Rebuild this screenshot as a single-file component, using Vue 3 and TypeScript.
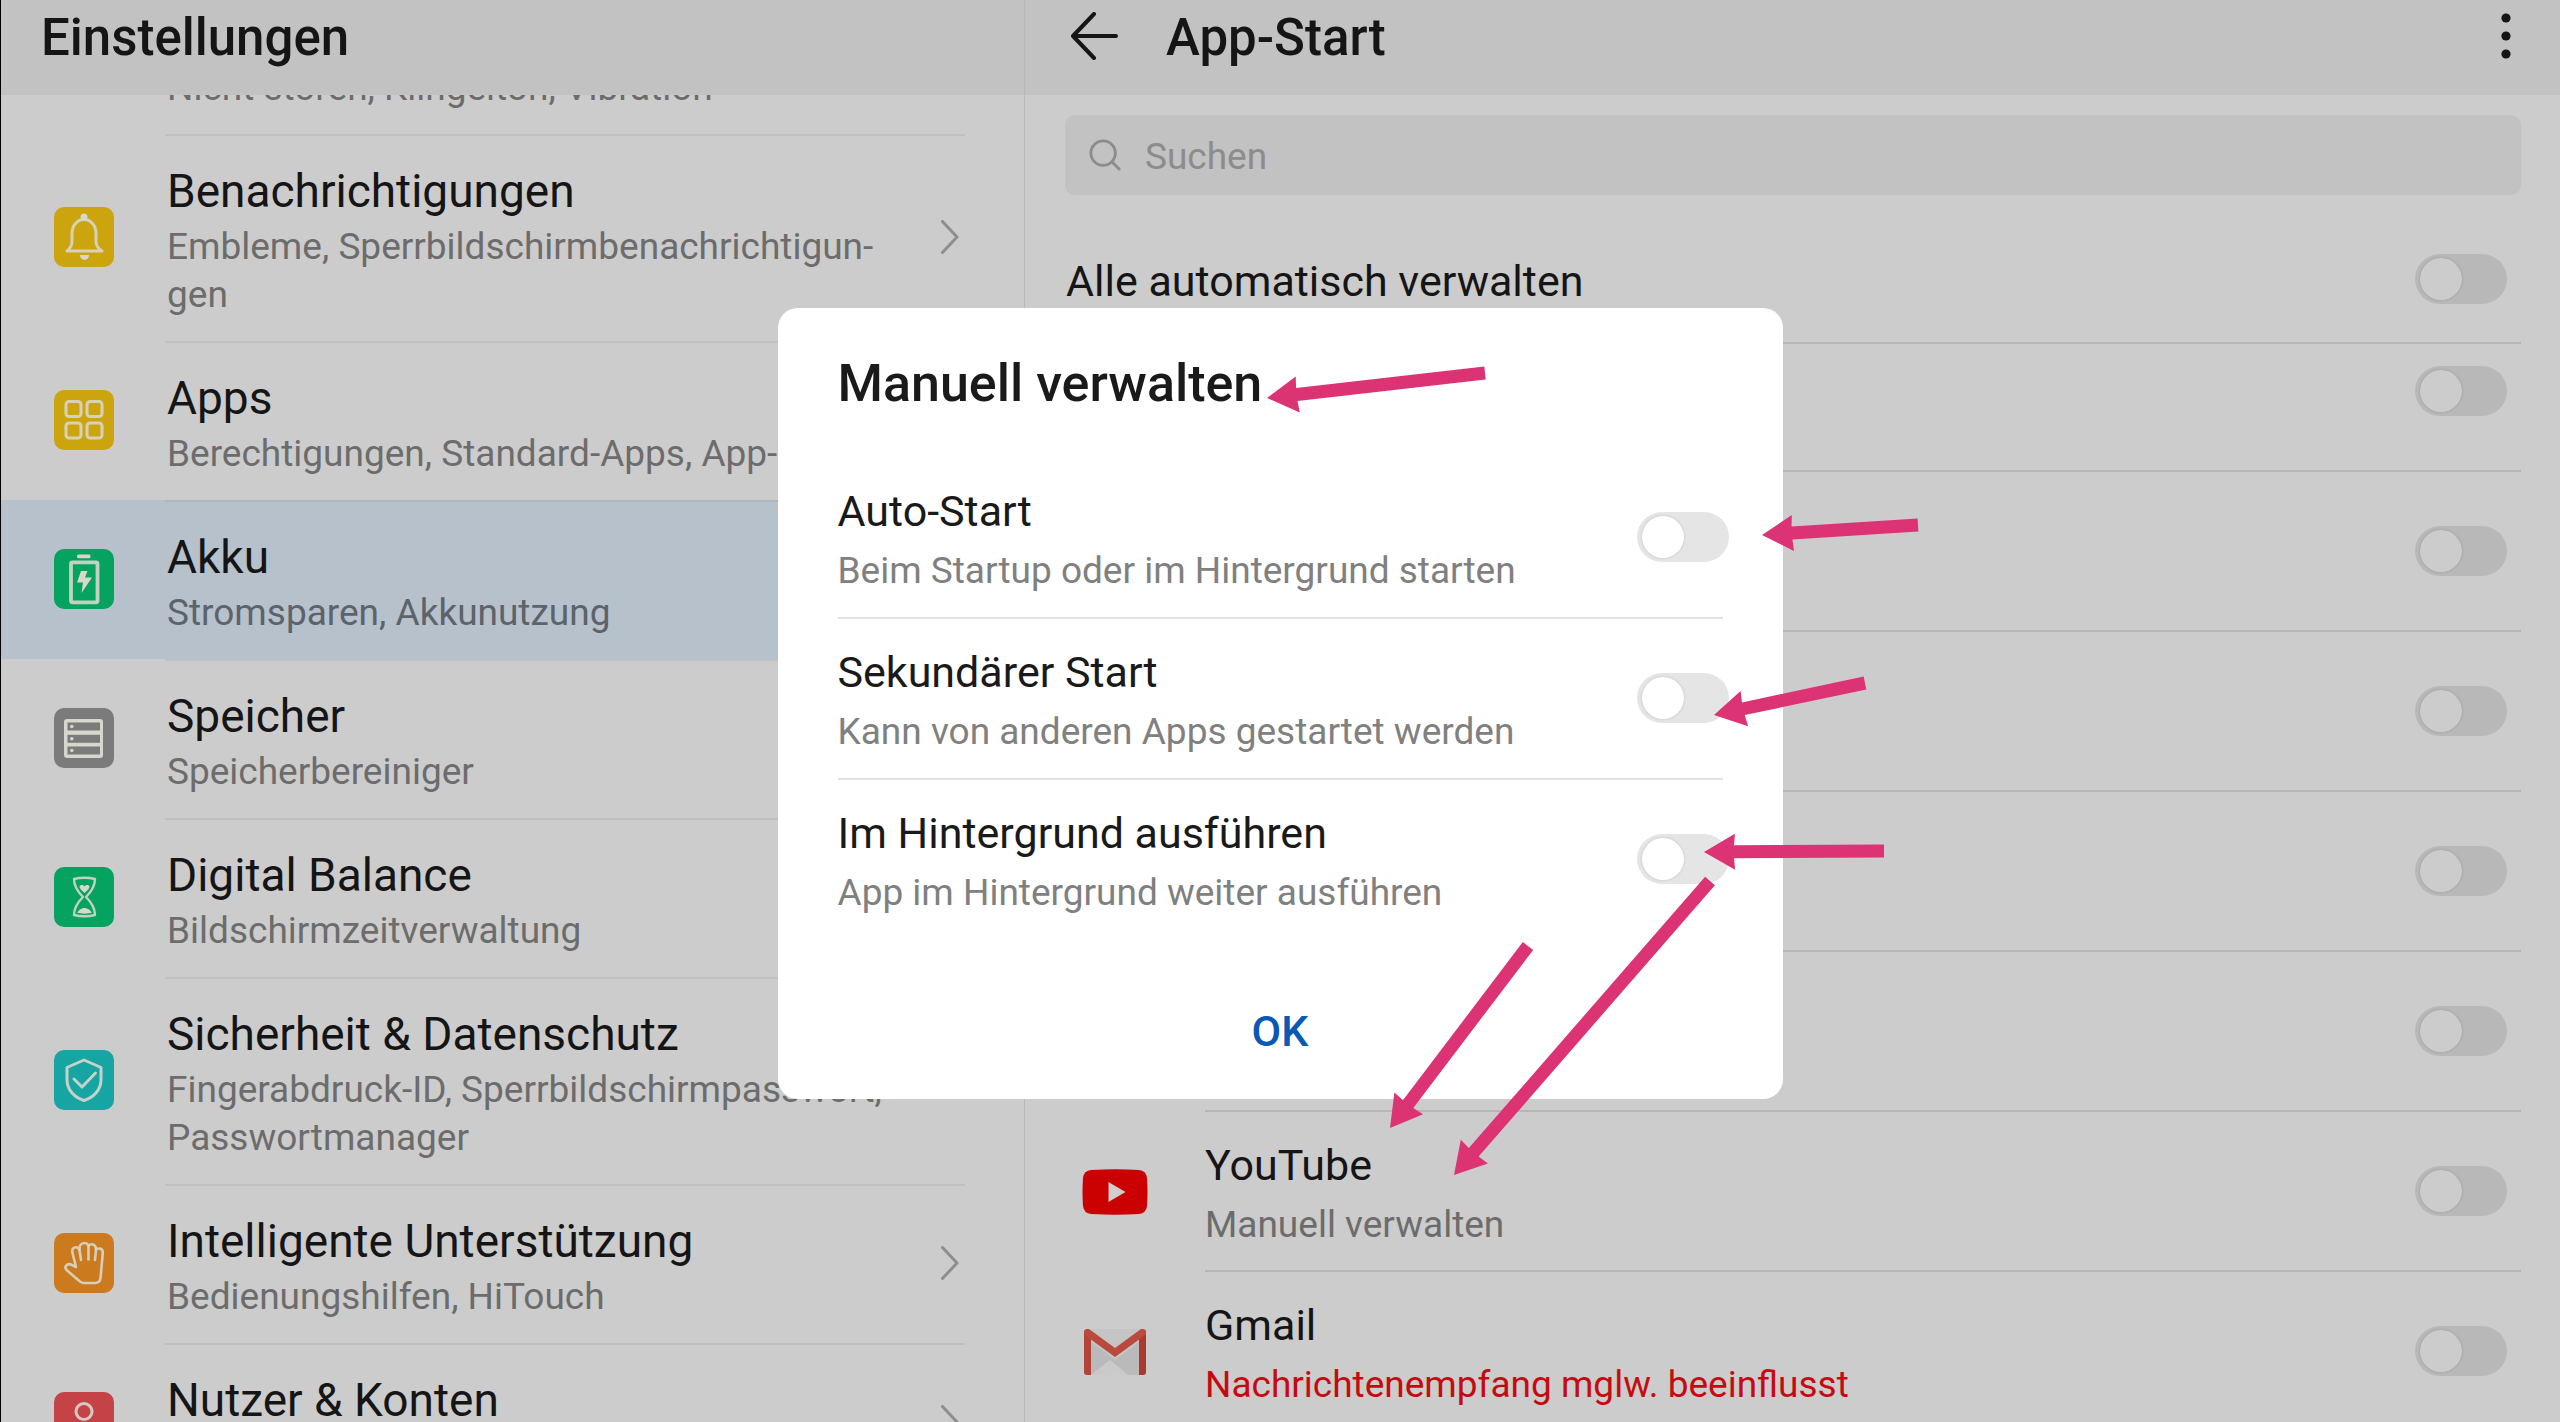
<script setup lang="ts">
import { ref } from 'vue'

type IconName = 'none' | 'bell' | 'apps' | 'battery' | 'storage' | 'hourglass' | 'shield' | 'hand' | 'user'

interface Category {
  icon: IconName
  color: string
  title?: string
  summary?: string
  active?: boolean
}

interface LaunchApp {
  id: number
  name?: string
  logo?: 'youtube' | 'gmail'
  note?: string
  warn?: boolean
}

interface Arrow {
  from: [number, number]
  to: [number, number]
}

const categories: Category[] = [
  { icon: 'none', color: 'transparent', summary: 'Nicht stören, Klingelton, Vibration' },
  { icon: 'bell', color: '#cca40e', title: 'Benachrichtigungen', summary: 'Embleme, Sperrbildschirmbenachrichtigun\u00adgen' },
  { icon: 'apps', color: '#cca40e', title: 'Apps', summary: 'Berechtigungen, Standard-Apps, App-Twin' },
  { icon: 'battery', color: '#05a35f', title: 'Akku', summary: 'Stromsparen, Akkunutzung', active: true },
  { icon: 'storage', color: '#7b7b7b', title: 'Speicher', summary: 'Speicherbereiniger' },
  { icon: 'hourglass', color: '#05a35f', title: 'Digital Balance', summary: 'Bildschirmzeitverwaltung' },
  { icon: 'shield', color: '#16a5a2', title: 'Sicherheit & Datenschutz', summary: 'Fingerabdruck-ID, Sperrbildschirmpasswort, Passwortmanager' },
  { icon: 'hand', color: '#cb7b1d', title: 'Intelligente Unterstützung', summary: 'Bedienungshilfen, HiTouch' },
  { icon: 'user', color: '#c54346', title: 'Nutzer & Konten' },
]

const apps: LaunchApp[] = [
  { id: 1 },
  { id: 2 },
  { id: 3 },
  { id: 4 },
  { id: 5 },
  { id: 6, name: 'YouTube', logo: 'youtube', note: 'Manuell verwalten' },
  { id: 7, name: 'Gmail', logo: 'gmail', note: 'Nachrichtenempfang mglw. beeinflusst', warn: true },
]

const options = ref([
  { id: 'auto', title: 'Auto-Start', note: 'Beim Startup oder im Hintergrund starten', on: false },
  { id: 'secondary', title: 'Sekundärer Start', note: 'Kann von anderen Apps gestartet werden', on: false },
  { id: 'background', title: 'Im Hintergrund ausführen', note: 'App im Hintergrund weiter ausführen', on: false },
])

const arrows: Arrow[] = [
  { from: [1485, 373], to: [1267, 398] },
  { from: [1918, 525], to: [1762, 535] },
  { from: [1865, 683], to: [1714, 715] },
  { from: [1884, 851], to: [1704, 852] },
  { from: [1528, 946], to: [1390, 1128] },
  { from: [1710, 881], to: [1454, 1175] },
]

// Outline of a solid arrow: shaft 13 wide, head 31 long and 36 wide
function arrowPoints({ from, to }: Arrow): string {
  const length = Math.hypot(to[0] - from[0], to[1] - from[1])
  const ux = (to[0] - from[0]) / length
  const uy = (to[1] - from[1]) / length
  const at = (back: number, side: number) =>
    `${(to[0] - ux * back - uy * side).toFixed(1)},${(to[1] - uy * back + ux * side).toFixed(1)}`
  return [
    at(length, 6.5), at(30, 6.5), at(31, 18), at(0, 0), at(31, -18), at(30, -6.5), at(length, -6.5),
  ].join(' ')
}
</script>

<template>
  <div class="screen">
    <aside class="pane pane-left">
      <header class="bar">
        <h1 class="bar-title">Einstellungen</h1>
      </header>
      <nav class="viewport">
        <ul class="categories">
          <li v-for="c in categories" :key="c.icon">
            <a href="#" class="category" :class="{ active: c.active }">
              <svg class="tile" viewBox="0 0 60 60" aria-hidden="true">
                <rect width="60" height="60" rx="10" :fill="c.color" />
                <g class="glyph">
                  <template v-if="c.icon === 'bell'">
                    <path d="M13 44C17 41 18 38 18 34V26A12 13.500 0 0 1 42 26V34C42 38 43 41 48 44Z" />
                    <circle class="solid" cx="30" cy="10" r="3.500" />
                    <path class="solid" d="M26 48h9a4.500 5 0 0 1-9 0z" />
                  </template>
                  <template v-else-if="c.icon === 'apps'">
                    <rect x="12" y="11.500" width="15" height="15" rx="3" />
                    <rect x="33" y="11.500" width="15" height="15" rx="3" />
                    <rect x="12" y="33" width="15" height="15" rx="3" />
                    <rect x="33" y="33" width="15" height="15" rx="3" />
                  </template>
                  <template v-else-if="c.icon === 'battery'">
                    <rect class="solid" x="23" y="5.500" width="13.500" height="3.800" rx="1.500" />
                    <rect x="17" y="13.300" width="26.500" height="40" rx="1.500" stroke-width="3.800" />
                    <path class="solid" d="M27 22h6.500l-2.500 6.500h7L27.500 44l1.500-10.500h-6z" />
                  </template>
                  <template v-else-if="c.icon === 'storage'">
                    <rect class="solid" x="10" y="11" width="39" height="39" rx="3" />
                    <g :fill="c.color" stroke="none">
                      <rect x="13.500" y="14.500" width="32.500" height="8" />
                      <rect x="13.500" y="26.800" width="32.500" height="8" />
                      <rect x="13.500" y="38.500" width="32.500" height="8" />
                    </g>
                    <circle class="solid" cx="17.800" cy="18.500" r="1.800" />
                    <circle class="solid" cx="17.800" cy="30.800" r="1.800" />
                    <circle class="solid" cx="17.800" cy="42.500" r="1.800" />
                  </template>
                  <template v-else-if="c.icon === 'hourglass'">
                    <path stroke-width="2.400" d="M20 12C26 10.500 35 10.500 41 12C41 20 36 26 32 30C36 34 41 40 41 48C35 49.500 26 49.500 20 48C20 40 25 34 29 30C25 26 20 20 20 12Z" />
                    <path class="solid" d="M30.500 26C27 23 25.500 21 25.500 19.500C26 17.500 29.500 17.500 30.500 19.500C31.500 17.500 35 17.500 35.500 19.500C35.500 21 34 23 30.500 26Z" />
                    <path class="solid" d="M23 45.500C25 43 28 41 30.500 41S36 43 38 45.500C34 47 27 47 23 45.500Z" />
                  </template>
                  <template v-else-if="c.icon === 'shield'">
                    <path d="M30 10L47 17.500V30C47 40 39 48 30 50.500C21 48 13 40 13 30V17.500Z" />
                    <path d="M20 29L28 37L41.500 23" />
                  </template>
                  <template v-else-if="c.icon === 'hand'">
                    <path stroke-width="2.600" d="M22 34L18.500 20C17 13.500 24 12.500 25.500 17C25 9 33 8 34.500 13C37 10 42 11 42 16.500C45 14.500 49 15.500 48.800 20L46.500 45Q46 50 41 50H30Q28 50 26 48.500L12.500 37C9.500 33.500 14 29.500 18 32Z" />
                    <path stroke-width="2.600" d="M25.500 17L27 27M34.500 13V26.500M42 16.500L41 27" />
                  </template>
                  <template v-else-if="c.icon === 'user'">
                    <circle cx="30" cy="19.500" r="8" />
                    <path d="M14 49C14 38 21 34 30 34S46 38 46 49Z" />
                  </template>
                </g>
              </svg>
              <span class="category-body">
                <span class="texts">
                  <span class="category-title">{{ c.title }}</span>
                  <span class="category-note">{{ c.summary }}</span>
                </span>
                <svg class="chevron" viewBox="0 0 18 34" aria-hidden="true"><path d="M1.500 1.500L16 17L1.500 32.500" /></svg>
              </span>
            </a>
          </li>
        </ul>
      </nav>
    </aside>

    <main class="pane pane-right">
      <header class="bar">
        <button type="button" class="icon-button" aria-label="Zurück">
          <svg width="48" height="48" viewBox="0 0 48 48"><path class="arrow-back" d="M24 2L3 24L24 46M3 24H46" /></svg>
        </button>
        <h2 class="bar-title">App-Start</h2>
        <button type="button" class="icon-button menu" aria-label="Mehr">
          <svg width="10" height="46" viewBox="0 0 10 46">
            <circle cx="5" cy="5" r="4.600" /><circle cx="5" cy="23" r="4.600" /><circle cx="5" cy="41" r="4.600" />
          </svg>
        </button>
      </header>
      <div class="content">
        <label class="search">
          <svg width="32" height="32" viewBox="0 0 34 34" aria-hidden="true"><circle cx="15" cy="15" r="13" /><path d="M24.500 24.500L32 32" /></svg>
          <input type="search" placeholder="Suchen" aria-label="Suchen" />
        </label>
        <label class="manage-all">
          <span class="row-title">Alle automatisch verwalten</span>
          <input type="checkbox" role="switch" class="switch" />
        </label>
        <div class="viewport">
          <ul class="apps">
            <li v-for="app in apps" :key="app.id" class="app">
              <span class="logo">
                <svg v-if="app.logo === 'youtube'" width="66" height="46" viewBox="0 0 66 46" aria-hidden="true">
                  <path fill="#cb0101" d="M9 1Q33-.5 57 1Q64 1.500 65 9Q66 23 65 37Q64 44.500 57 45Q33 46.500 9 45Q2 44.500 1 37Q0 23 1 9Q2 1.500 9 1Z" />
                  <path fill="#d3cccc" d="M26.500 13V33L43.500 23Z" />
                </svg>
                <svg v-else-if="app.logo === 'gmail'" width="62" height="46" viewBox="0 0 62 46" aria-hidden="true">
                  <rect width="62" height="46" rx="3" fill="#c5c5c5" />
                  <path fill="#bababa" d="M7 13L31 31L55 13V46H44L26 31L7 46Z" />
                  <path fill="#cacaca" d="M7 46L26 31L44 46Z" />
                  <path fill="#b34336" d="M0 3Q0 0 4 0L7 4V46H3Q0 46 0 43Z" />
                  <path fill="#a93a2d" d="M62 3Q62 0 58 0L55 4V46H59Q62 46 62 43Z" />
                  <path fill="#b94a3d" d="M0 4Q0 0 5 0L31 19L57 0Q62 0 62 4Q62 6 60 7L31 28L2 7Q0 6 0 4Z" />
                </svg>
              </span>
              <label class="app-body">
                <span class="texts">
                  <span class="row-title">{{ app.name }}</span>
                  <span class="row-note" :class="{ warn: app.warn }">{{ app.note }}</span>
                </span>
                <input type="checkbox" role="switch" class="switch" :aria-label="app.name ?? 'App-Start'" />
              </label>
            </li>
          </ul>
        </div>
      </div>
    </main>

    <div class="overlay">
      <section class="dialog" role="dialog" aria-labelledby="dialog-title">
        <h2 id="dialog-title" class="dialog-title">Manuell verwalten</h2>
        <label v-for="o in options" :key="o.id" class="option">
          <span class="texts">
            <span class="row-title">{{ o.title }}</span>
            <span class="row-note">{{ o.note }}</span>
          </span>
          <input v-model="o.on" type="checkbox" role="switch" class="switch" />
        </label>
        <button type="button" class="confirm">OK</button>
      </section>
    </div>

    <svg class="annotations" viewBox="0 0 2560 1422" preserveAspectRatio="xMinYMin meet" aria-hidden="true">
      <polygon v-for="(a, i) in arrows" :key="i" :points="arrowPoints(a)" />
    </svg>
  </div>
</template>

<style>
body {
  margin: 0;
  background: #cccccc;
}
</style>

<style scoped>
* {
  box-sizing: border-box;
}

.screen {
  display: flex;
  height: 100vh;
  overflow: hidden;
  position: relative;
  background: #cccccc;
  color: #151515;
  font-family: Roboto, "Liberation Sans", sans-serif;
}

h1,
h2,
ul {
  margin: 0;
  padding: 0;
}

ul {
  list-style: none;
}

button {
  border: 0;
  padding: 0;
  background: none;
  font: inherit;
  color: inherit;
}

.pane {
  display: flex;
  flex-direction: column;
  min-width: 0;
}

.pane-left {
  flex: 0 0 40%;
  border-left: 1px solid #000000;
}

.pane-right {
  flex: 1;
  border-left: 1px solid #b9b9b9;
}

.bar {
  flex: none;
  display: flex;
  align-items: center;
  height: 95px;
  padding: 0 49px 20px 40px;
  background: #c2c2c2;
}

.pane-right .bar {
  padding-left: 45px;
}

.bar-title {
  font-size: 51px;
  font-weight: 500;
  line-height: 60px;
}

.icon-button {
  display: flex;
  margin-top: -4px;
}

.icon-button + .bar-title {
  margin-left: 48px;
}

.menu {
  margin-left: auto;
}

.arrow-back {
  fill: none;
  stroke: #151515;
  stroke-width: 4;
  stroke-linecap: round;
  stroke-linejoin: round;
}

.menu svg {
  fill: #151515;
}

.viewport {
  flex: 1;
  min-height: 0;
  overflow: hidden;
}

.categories {
  margin-top: -120px;
}

.category {
  display: flex;
  align-items: stretch;
  padding-left: 53px;
  color: inherit;
  text-decoration: none;
}

.category.active {
  background: #b6c1cc;
}

.tile {
  flex: none;
  align-self: center;
  width: 60px;
  height: 60px;
  margin: 0 51px 2px 0;
}

.glyph {
  fill: none;
  stroke: rgba(215, 215, 205, 0.9);
  stroke-width: 3;
  stroke-linejoin: round;
  stroke-linecap: round;
}

.solid {
  fill: rgb(215, 215, 205);
  stroke: none;
}

.category-body {
  flex: 1;
  display: flex;
  align-items: center;
  justify-content: space-between;
  margin-right: 59px;
  padding: 25px 6px 22px 2px;
  border-top: 2px solid #c0c0c0;
}

.active .category-body {
  border-color: #aeb7bf;
}

.texts {
  display: flex;
  flex-direction: column;
}

.category .texts {
  max-width: 740px;
  gap: 2px;
}

.category-title {
  min-height: 60px;
  font-size: 46px;
  line-height: 60px;
}

.category-note {
  min-height: 48px;
  font-size: 37px;
  line-height: 48px;
  color: #6c6c6c;
}

.active .category-note {
  color: #5c636a;
}

.chevron {
  flex: none;
  width: 18px;
  height: 34px;
  margin-bottom: 6px;
  fill: none;
  stroke: #8e8e8e;
  stroke-width: 3;
  stroke-linecap: round;
  stroke-linejoin: round;
}

.content {
  flex: 1;
  min-height: 0;
  display: flex;
  flex-direction: column;
  padding: 20px 39px 0 40px;
}

.search {
  flex: none;
  display: flex;
  align-items: center;
  gap: 24px;
  height: 80px;
  padding: 0 24px;
  border-radius: 10px;
  background: #c2c2c2;
}

.search svg {
  flex: none;
  fill: none;
  stroke: #8c8c8c;
  stroke-width: 3;
  stroke-linecap: round;
}

.search input {
  flex: 1;
  min-width: 0;
  border: 0;
  padding: 4px 0 0;
  outline: 0;
  background: none;
  font: inherit;
  font-size: 37px;
  line-height: 48px;
}

.search input::placeholder {
  color: #8c8c8c;
  opacity: 1;
}

.manage-all {
  flex: none;
  display: flex;
  align-items: center;
  justify-content: space-between;
  margin-top: 20px;
  height: 129px;
  padding: 0 14px 0 1px;
  border-bottom: 2px solid #b6b6b6;
}

.manage-all .row-title {
  padding-top: 4px;
}

.row-title {
  font-size: 43px;
  line-height: 56px;
}

.row-note {
  font-size: 37px;
  line-height: 56px;
  color: #6c6c6c;
}

.row-note.warn {
  color: #c50b10;
}

.switch {
  appearance: none;
  flex: none;
  display: flex;
  align-items: center;
  width: 92px;
  height: 50px;
  margin: 0;
  padding: 0 5px;
  border-radius: 25px;
  background: #b8b8b8;
}

.switch::before {
  content: "";
  width: 42px;
  height: 42px;
  border-radius: 50%;
  background: #cccccc;
  box-shadow: 0 0 3px rgba(0, 0, 0, 0.16);
}

.switch:checked {
  justify-content: flex-end;
}

.apps {
  margin-top: -32px;
}

.app {
  display: flex;
  height: 160px;
}

.logo {
  flex: none;
  display: flex;
  align-items: center;
  justify-content: center;
  width: 99px;
  margin-right: 41px;
}

.app-body {
  flex: 1;
  display: flex;
  align-items: center;
  justify-content: space-between;
  padding-right: 14px;
  border-bottom: 2px solid #b6b6b6;
}

.app-body .texts,
.option .texts {
  gap: 4px;
  padding-top: 8px;
}

.overlay {
  position: absolute;
  inset: 0;
  display: flex;
  align-items: center;
  justify-content: center;
  padding-bottom: 16px;
}

.dialog {
  display: flex;
  flex-direction: column;
  width: 1005px;
  max-width: 90%;
  padding: 46px 60px 26px;
  border-radius: 20px;
  background: #ffffff;
  color: #1a1a1a;
}

.dialog-title {
  margin-bottom: 44px;
  font-size: 52px;
  font-weight: 500;
  line-height: 60px;
}

.option {
  display: flex;
  align-items: center;
  justify-content: space-between;
  height: 161px;
  border-bottom: 2px solid #e2e2e2;
}

.option:last-of-type {
  border-color: transparent;
}

.dialog .row-note {
  color: #808080;
}

.dialog .switch {
  margin-right: -6px;
  background: #e5e5e5;
}

.dialog .switch::before {
  background: #ffffff;
}

.confirm {
  align-self: center;
  width: 400px;
  height: 84px;
  margin-top: 48px;
  font-size: 43px;
  font-weight: 500;
  line-height: 56px;
  color: #0a59b5;
}

.annotations {
  position: absolute;
  inset: 0;
  width: 100%;
  pointer-events: none;
  fill: #dc3375;
}
</style>
